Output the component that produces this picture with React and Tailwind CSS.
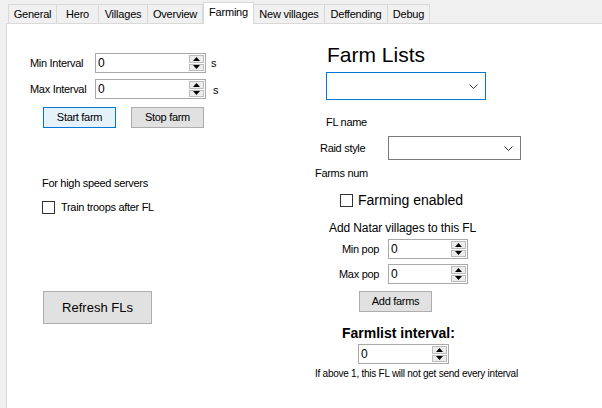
const tabs = ['General', 'Hero', 'Villages', 'Overview', 'Farming', 'New villages', 'Deffending', 'Debug'];
const tabWidths = { General: 'w-[49px]', Hero: 'w-[42px]', Villages: 'w-[49px]', Overview: 'w-[55px]', Farming: 'w-[51px]', 'New villages': 'w-[71px]', Deffending: 'w-[63px]', Debug: 'w-[42px]' };

function Spinner() {
  return (
    <div className="flex flex-col w-[16px] h-full py-[1px] pr-[1px] gap-[1px]">
      <div className="flex-1 flex items-center justify-center bg-[#ececec] border border-[#bcbcbc]">
        <svg width="7" height="4" viewBox="0 0 7 4"><path d="M0 4h7L3.5 0z" fill="#000" /></svg>
      </div>
      <div className="flex-1 flex items-center justify-center bg-[#ececec] border border-[#bcbcbc]">
        <svg width="7" height="4" viewBox="0 0 7 4"><path d="M0 0h7L3.5 4z" fill="#000" /></svg>
      </div>
    </div>
  );
}

function NumBox({ w, h = 'h-[20px]' }) {
  return (
    <div className={`${w} ${h} flex items-stretch bg-white border border-[#a9a9a9]`}>
      <span className="flex-1 pl-[2px] flex items-center text-[12px] leading-none">0</span>
      <Spinner />
    </div>
  );
}

function Chevron() {
  return (
    <svg width="9" height="5" viewBox="0 0 9 5" className="mr-[7px]">
      <path d="M0.5 0.5l4 4l4-4" fill="none" stroke="#333" strokeWidth="1" />
    </svg>
  );
}

function Check({ size = 'w-[13px] h-[13px]' }) {
  return <div className={`${size} bg-white border border-[#333]`} />;
}

export default function App() {
  return (
    <div className="w-[602px] h-[408px] bg-[#f0f0f0] flex flex-col text-black overflow-hidden" style={{ fontFamily: '"Liberation Sans", Arial, sans-serif' }}>
      {/* tab strip */}
      <div className="h-[23px] flex items-end pl-[8px] shrink-0">
        {tabs.map((t) =>
          t === 'Farming' ? (
            <div key={t} className={`${tabWidths[t]} h-[22px] -mb-px relative z-10 bg-white border border-b-0 border-[#d9d9d9] flex items-center justify-center text-[11px] tracking-[-0.2px] pb-[2px]`}>
              {t}
            </div>
          ) : (
            <div key={t} className={`${tabWidths[t]} h-[19px] bg-[#f0f0f0] border border-l-0 first:border-l border-b-0 border-[#d9d9d9] flex items-center justify-center text-[11px] tracking-[-0.2px]`}>
              {t}
            </div>
          )
        )}
      </div>

      {/* panel */}
      <div className="flex-1 ml-[6px] bg-white border-l border-t border-[#d9d9d9] flex text-[11px] tracking-[-0.3px]">
        {/* left column */}
        <div className="w-[308px] shrink-0 pl-[23px] pt-[29px] flex flex-col">
          <div className="h-[20px] flex items-center">
            <span className="w-[65px]">Min Interval</span>
            <NumBox w="w-[111px]" />
            <span className="ml-[5px]">s</span>
          </div>
          <div className="h-[20px] mt-[6px] flex items-center">
            <span className="w-[65px]">Max Interval</span>
            <NumBox w="w-[111px]" />
            <span className="ml-[7px] mt-[3px]">s</span>
          </div>
          <div className="h-[21px] mt-[8px] ml-[13px] flex gap-[15px]">
            <button className="w-[73px] h-full bg-[#e5f1fb] border border-[#0078d7] text-[11px]">Start farm</button>
            <button className="w-[73px] h-full bg-[#e1e1e1] border border-[#adadad] text-[11px]">Stop farm</button>
          </div>
          <div className="h-[16px] mt-[47px] ml-[12px] flex items-center">For high speed servers</div>
          <div className="h-[16px] mt-[8px] ml-[12px] flex items-center gap-[6px]">
            <Check />
            <span>Train troops after FL</span>
          </div>
          <button className="w-[109px] h-[33px] mt-[76px] ml-[13px] bg-[#e1e1e1] border border-[#adadad] text-[13px] tracking-normal">Refresh FLs</button>
        </div>

        {/* right column */}
        <div className="flex-1 pt-[19px] flex flex-col">
          <div className="h-[24px] ml-[12px] flex items-center text-[21px] tracking-normal">Farm Lists</div>
          <div className="w-[160px] h-[28px] mt-[5px] ml-[11px] bg-white border border-[#0078d7] flex items-center justify-end">
            <Chevron />
          </div>
          <div className="h-[16px] mt-[14px] ml-[11px] flex items-center">FL name</div>
          <div className="h-[24px] mt-[6px] ml-[5px] flex items-center">
            <span className="w-[68px]">Raid style</span>
            <div className="w-[133px] h-full bg-white border border-[#7a7a7a] flex items-center justify-end">
              <Chevron />
            </div>
          </div>
          <div className="h-[16px] mt-[5px] flex items-center">Farms num</div>
          <div className="h-[18px] mt-[10px] ml-[25px] flex items-center gap-[5px]">
            <Check />
            <span className="text-[14px] tracking-normal">Farming enabled</span>
          </div>
          <div className="h-[16px] mt-[11px] ml-[14px] flex items-center text-[12px] tracking-[-0.1px]">Add Natar villages to this FL</div>
          <div className="h-[20px] mt-[3px] ml-[27px] flex items-center">
            <span className="w-[46px]">Min pop</span>
            <NumBox w="w-[80px]" />
          </div>
          <div className="h-[20px] mt-[5px] ml-[24px] flex items-center">
            <span className="w-[49px]">Max pop</span>
            <NumBox w="w-[80px]" />
          </div>
          <button className="w-[73px] h-[21px] mt-[7px] ml-[44px] bg-[#e1e1e1] border border-[#adadad] text-[11px]">Add farms</button>
          <div className="h-[18px] mt-[12px] ml-[27px] flex items-center text-[14px] font-bold tracking-normal">Farmlist interval:</div>
          <div className="mt-[2px] ml-[43px]">
            <NumBox w="w-[91px]" />
          </div>
          <div className="h-[12px] mt-[3px] flex items-center text-[10px] tracking-[-0.25px]">If above 1, this FL will not get send every interval</div>
        </div>
      </div>
    </div>
  );
}
